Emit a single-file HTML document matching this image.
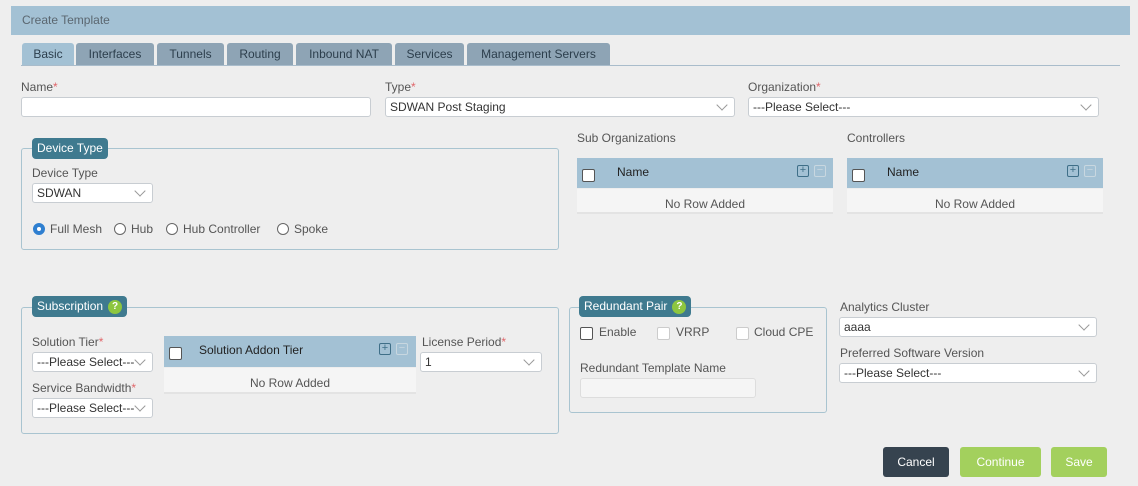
<!DOCTYPE html>
<html><head><style>
*{box-sizing:border-box;margin:0;padding:0}
body{width:1138px;height:486px;background:#eeeeee;font-family:"Liberation Sans",sans-serif;font-size:12px;color:#555;position:relative;overflow:hidden}
.a{position:absolute}
.lbl{position:absolute;font-size:12px;color:#555;white-space:nowrap}
.lbl b{color:#e0666a;font-weight:normal}
.in{position:absolute;background:#fff;border:1px solid #c8cdd2;border-radius:3px;height:20px;font-size:12px;color:#333;padding:2px 4px;white-space:nowrap;overflow:hidden}
.sel:after{content:"";position:absolute;right:8px;top:3px;width:7px;height:7px;border-right:1px solid #999;border-bottom:1px solid #999;transform:rotate(45deg)}
.fs{position:absolute;border:1px solid #a9c4d0;border-radius:3px}
.lg{position:absolute;background:#3f7a8f;color:#fff;font-size:12px;border-radius:4px;padding:3px 5px;white-space:nowrap;height:21px}
.q{display:inline-block;width:14px;height:14px;border-radius:50%;background:#8dc63f;color:#fff;font-size:10px;font-weight:bold;text-align:center;line-height:14px;margin-left:5px;vertical-align:1px}
.tab{position:absolute;top:43px;height:22px;background:#8ea4b5;color:#2c3e4c;font-size:12px;border-radius:3px 3px 0 0;text-align:center;line-height:22px}
.th{position:absolute;background:#a3c1d4;color:#222;font-size:12px}
.tb{position:absolute;background:#f5f5f5;border-bottom:2px solid #e3e3e3;color:#555;text-align:center;font-size:12px}
.cb{position:absolute;width:13px;height:13px;background:#fff;border:1px solid #555;border-radius:2px}
.pl{position:absolute;width:12px;height:12px;border:1px solid #3f6f88;border-radius:2px;color:#3f6f88;font-size:11px;line-height:9px;text-align:center}
.mi{position:absolute;width:12px;height:12px;border:1px solid #c8d7e0;border-radius:2px;color:#c8d7e0;font-size:11px;line-height:9px;text-align:center}
.rd{position:absolute;width:12px;height:12px;border:1px solid #666;border-radius:50%;background:#fff}
.btn{position:absolute;top:447px;height:30px;border-radius:3px;color:#fff;font-size:12px;text-align:center;line-height:30px}
</style></head><body>
<div class="a" style="left:11px;top:6px;width:1119px;height:29px;background:#a3c1d4;color:#5b6770;padding:7px 11px;font-size:12px">Create Template</div>
<div class="tab" style="left:22px;width:52px;background:#a3c1d4">Basic</div>
<div class="tab" style="left:76px;width:78px">Interfaces</div>
<div class="tab" style="left:157px;width:67px">Tunnels</div>
<div class="tab" style="left:227px;width:66px">Routing</div>
<div class="tab" style="left:296px;width:96px">Inbound NAT</div>
<div class="tab" style="left:395px;width:69px">Services</div>
<div class="tab" style="left:467px;width:143px">Management Servers</div>
<div class="a" style="left:21px;top:65px;width:1099px;height:1px;background:#a9bccb"></div>

<div class="lbl" style="left:21px;top:80px">Name<b>*</b></div>
<div class="in" style="left:21px;top:97px;width:350px"></div>
<div class="lbl" style="left:385px;top:80px">Type<b>*</b></div>
<div class="in sel" style="left:385px;top:97px;width:350px">SDWAN Post Staging</div>
<div class="lbl" style="left:748px;top:80px">Organization<b>*</b></div>
<div class="in sel" style="left:748px;top:97px;width:351px">---Please Select---</div>

<div class="fs" style="left:21px;top:148px;width:538px;height:102px"></div>
<div class="lg" style="left:32px;top:138px">Device Type</div>
<div class="lbl" style="left:32px;top:166px">Device Type</div>
<div class="in sel" style="left:32px;top:183px;width:121px">SDWAN</div>
<div class="rd" style="left:33px;top:223px;border:4px solid #2f7fd0"></div><div class="lbl" style="left:50px;top:222px">Full Mesh</div>
<div class="rd" style="left:114px;top:223px"></div><div class="lbl" style="left:131px;top:222px">Hub</div>
<div class="rd" style="left:166px;top:223px"></div><div class="lbl" style="left:183px;top:222px">Hub Controller</div>
<div class="rd" style="left:277px;top:223px"></div><div class="lbl" style="left:294px;top:222px">Spoke</div>

<div class="lbl" style="left:577px;top:131px">Sub Organizations</div>
<div class="th" style="left:577px;top:158px;width:256px;height:30px"></div>
<div class="cb" style="left:582px;top:169px"></div><div class="lbl" style="left:617px;top:165px;color:#222">Name</div>
<div class="pl" style="left:797px;top:165px">+</div><div class="mi" style="left:814px;top:165px">−</div>
<div class="tb" style="left:577px;top:189px;width:256px;height:25px;line-height:30px">No Row Added</div>

<div class="lbl" style="left:847px;top:131px">Controllers</div>
<div class="th" style="left:847px;top:158px;width:256px;height:30px"></div>
<div class="cb" style="left:852px;top:169px"></div><div class="lbl" style="left:887px;top:165px;color:#222">Name</div>
<div class="pl" style="left:1067px;top:165px">+</div><div class="mi" style="left:1084px;top:165px">−</div>
<div class="tb" style="left:847px;top:189px;width:256px;height:25px;line-height:30px">No Row Added</div>

<div class="fs" style="left:21px;top:307px;width:538px;height:127px"></div>
<div class="lg" style="left:32px;top:296px">Subscription<span class="q">?</span></div>
<div class="lbl" style="left:32px;top:335px">Solution Tier<b>*</b></div>
<div class="in sel" style="left:32px;top:352px;width:121px">---Please Select---</div>
<div class="lbl" style="left:32px;top:381px">Service Bandwidth<b>*</b></div>
<div class="in sel" style="left:32px;top:398px;width:121px">---Please Select---</div>
<div class="th" style="left:164px;top:336px;width:252px;height:31px"></div>
<div class="cb" style="left:169px;top:347px"></div><div class="lbl" style="left:199px;top:343px;color:#222">Solution Addon Tier</div>
<div class="pl" style="left:379px;top:343px">+</div><div class="mi" style="left:396px;top:343px">−</div>
<div class="tb" style="left:164px;top:368px;width:252px;height:26px;line-height:30px">No Row Added</div>
<div class="lbl" style="left:422px;top:335px">License Period<b>*</b></div>
<div class="in sel" style="left:420px;top:352px;width:122px">1</div>

<div class="fs" style="left:569px;top:307px;width:258px;height:106px"></div>
<div class="lg" style="left:579px;top:296px">Redundant Pair<span class="q">?</span></div>
<div class="cb" style="left:580px;top:327px"></div><div class="lbl" style="left:599px;top:325px">Enable</div>
<div class="cb" style="left:657px;top:327px;border-color:#ccc"></div><div class="lbl" style="left:676px;top:325px">VRRP</div>
<div class="cb" style="left:736px;top:327px;border-color:#ccc"></div><div class="lbl" style="left:754px;top:325px">Cloud CPE</div>
<div class="lbl" style="left:580px;top:361px">Redundant Template Name</div>
<div class="in" style="left:580px;top:378px;width:176px;background:#f5f5f5;border-color:#ddd"></div>

<div class="lbl" style="left:840px;top:300px">Analytics Cluster</div>
<div class="in sel" style="left:839px;top:317px;width:258px">aaaa</div>
<div class="lbl" style="left:840px;top:346px">Preferred Software Version</div>
<div class="in sel" style="left:839px;top:363px;width:258px">---Please Select---</div>

<div class="btn" style="left:883px;width:66px;background:#36434f">Cancel</div>
<div class="btn" style="left:960px;width:81px;background:#a3d05d">Continue</div>
<div class="btn" style="left:1051px;width:56px;background:#a3d05d">Save</div>
</body></html>
